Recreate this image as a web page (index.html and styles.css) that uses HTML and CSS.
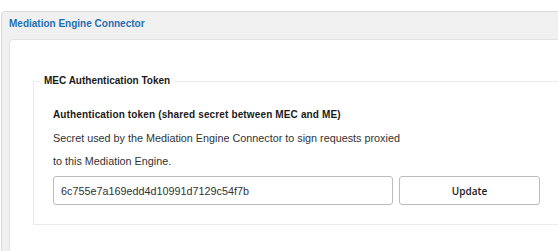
FILE: index.html
```html
<!DOCTYPE html>
<html lang="en">
<head>
<meta charset="utf-8">
<title>Mediation Engine Connector</title>
<link rel="stylesheet" href="styles.css">
</head>
<body>
<div class="panel">
  <div class="panel-header">
    <h2 class="panel-title">Mediation Engine Connector</h2>
  </div>
  <div class="panel-body">
    <div class="card">
      <fieldset class="group">
        <legend class="group-legend">MEC Authentication Token</legend>
        <div class="group-content">
          <div class="field-label">Authentication token (shared secret between MEC and ME)</div>
          <p class="field-help">Secret used by the Mediation Engine Connector to sign requests proxied<br>to this Mediation Engine.</p>
          <div class="field-row">
            <input class="token-input" type="text" value="6c755e7a169edd4d10991d7129c54f7b">
            <button class="btn" type="button">Update</button>
          </div>
        </div>
      </fieldset>
    </div>
  </div>
</div>
</body>
</html>
```

FILE: styles.css
```css
html, body {
  margin: 0;
  height: 100%;
  overflow: hidden;
  background: #fff;
}
body {
  font-family: "Liberation Sans", Arial, sans-serif;
}
.panel {
  margin: 11px -40px 0 1px;
  border: 1px solid #dadada;
  border-radius: 4px;
  background: #f0f0f0;
  height: 320px;
}
.panel-header {
  height: 27px;
  box-sizing: border-box;
  padding: 6px 0 0 7px;
}
.panel-title {
  margin: 0;
  font-size: 10px;
  line-height: 12px;
  font-weight: bold;
  color: #1f6fb2;
}
.panel-body {
  padding-left: 7px;
}
.card {
  background: #fff;
  border: 1px solid #e1e1e1;
  border-radius: 4px 0 0 0;
  padding: 35px 0 0 23px;
  height: 300px;
}
.group {
  margin: 0;
  padding: 0;
  border: 1px solid #ebebeb;
  min-width: 0;
}
.group-legend {
  margin-left: 6px;
  padding: 0 4px;
  font-size: 10px;
  line-height: 12px;
  font-weight: bold;
  color: #1a1a1a;
}
.group-content {
  padding: 21px 0 19px 19px;
}
.field-label {
  font-size: 10px;
  line-height: 14px;
  font-weight: bold;
  letter-spacing: 0.14px;
  color: #1a1a1a;
}
.field-help {
  margin: 5px 0 0;
  font-size: 10.8px;
  line-height: 23px;
  color: #333;
}
.field-row {
  display: flex;
  gap: 6px;
  margin-top: 3px;
}
.token-input {
  box-sizing: border-box;
  width: 340px;
  height: 29px;
  margin: 0;
  border: 1px solid #bdbdbd;
  border-radius: 3px;
  padding: 0 7px;
  font-family: "Liberation Sans", Arial, sans-serif;
  font-size: 10.8px;
  color: #333;
  background: #fff;
}
.btn {
  box-sizing: border-box;
  width: 141px;
  height: 29px;
  margin: 0;
  border: 1px solid #bdbdbd;
  border-radius: 3px;
  background: #fff;
  font-family: "Open Sans", "Noto Sans", sans-serif;
  font-size: 10px;
  font-weight: 600;
  color: #1a1a1a;
}
```
